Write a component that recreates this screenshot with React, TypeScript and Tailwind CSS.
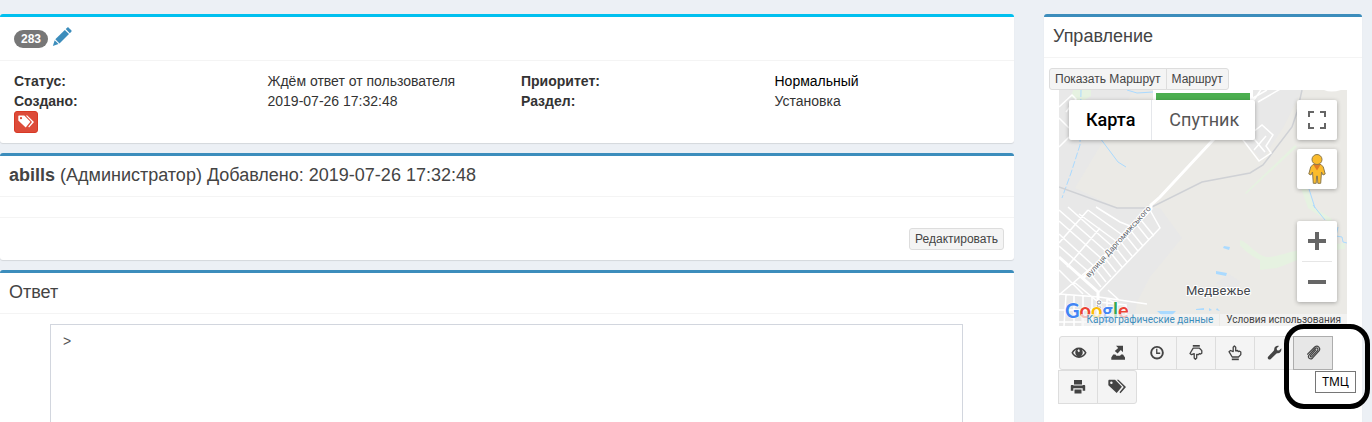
import type { ReactNode } from "react";

const FIELDS = [
  { label: "Статус:", value: "Ждём ответ от пользователя", valueClass: "" },
  { label: "Приоритет:", value: "Нормальный", valueClass: "text-black" },
  { label: "Создано:", value: "2019-07-26 17:32:48", valueClass: "" },
  { label: "Раздел:", value: "Установка", valueClass: "" },
];

function Icon({ children, className = "w-4 h-4" }: { children: ReactNode; className?: string }) {
  return (
    <svg viewBox="0 0 16 16" fill="currentColor" className={className} aria-hidden>
      {children}
    </svg>
  );
}

function TagsIcon({ className }: { className?: string }) {
  return (
    <Icon className={className}>
      <path
        fillRule="evenodd"
        d="M.3 2.600c0-.6.4-1 1-1h5L12.400 7.700 7.700 13.400 .3 6.500zM3 3.100a1.100 1.100 0 1 0 0 2.200 1.100 1.100 0 0 0 0-2.200z"
      />
      <path d="M7.800 1.600h1.500L16 8l-4.900 5.600-.9-.9L14 8.100z" />
    </Icon>
  );
}

function PencilIcon() {
  return (
    <svg viewBox="0 0 20 20" fill="currentColor" className="w-5 h-5" aria-hidden>
      <path d="M3.300 12.300 12.800 3l4.200 4.100-9.500 9.400z" />
      <path d="M13.700 2.100 15.200.7c.5-.5 1-.5 1.500 0l2.600 2.500c.5.5.5 1 0 1.500l-1.500 1.500z" />
      <path d="M2.700 13.300 6.500 17.100.9 18.900z" />
    </svg>
  );
}

const ACTIONS = [
  {
    label: "Просмотр",
    icon: (
      <Icon>
        <path
          fillRule="evenodd"
          d="M8 2.500c3.300 0 5.900 2 7.600 5.200-1.700 3.200-4.300 5.200-7.600 5.200S2.100 10.900.4 7.700C2.100 4.500 4.700 2.500 8 2.500zM2.200 7.700c1 1.700 2.300 2.800 3.900 3.300A4.200 4.200 0 0 1 5.300 4.700C4 5.300 3 6.300 2.200 7.700zm8.500-3a4.200 4.200 0 0 1-.8 6.300c1.600-.5 2.900-1.600 3.900-3.300-.8-1.400-1.800-2.400-3.100-3zM6.500 5.700l1.200 1.500 1.200-1-.8-1.900C7.300 4.300 6.700 4.900 6.500 5.700z"
        />
      </Icon>
    ),
  },
  {
    label: "Экспорт",
    icon: (
      <Icon>
        <path d="M6 .7h7v6.500L10.800 5 7.600 8.600 4.800 5.900l3.400-3z" />
        <path d="M3.200 9.400h2.200l1 1.300h3.700l1-1.300h1.900l2 3v2.300H1.300v-2.300z" />
      </Icon>
    ),
  },
  {
    label: "Время",
    icon: (
      <Icon>
        <path
          fillRule="evenodd"
          d="M8 .9a6.800 6.800 0 1 1 0 13.600A6.800 6.800 0 0 1 8 .9zm0 1.900a4.900 4.900 0 1 0 0 9.800 4.900 4.900 0 0 0 0-9.800z"
        />
        <path d="M7.100 3.700h1.300v3.900h2.800v1.300H7.100z" />
      </Icon>
    ),
  },
  {
    label: "Вниз",
    icon: (
      <Icon>
        <path d="M4.800 0h7v1.700h-7z" />
        <path
          fill="none"
          stroke="currentColor"
          strokeWidth="1.300"
          strokeLinejoin="round"
          d="M5.200 3.200h6.300l2.300 2.400v2.600l-1.200.8-1.300-.3-.9 1-1.700-.3v3.600l-1.300 1.200-1.200-1.200V8.600L3.500 9.700 2 8.500z"
        />
      </Icon>
    ),
  },
  {
    label: "Вверх",
    icon: (
      <Icon>
        <path d="M4.800 13.500h7v1.700h-7z" />
        <path
          fill="none"
          stroke="currentColor"
          strokeWidth="1.300"
          strokeLinejoin="round"
          d="M5.200 12h6.300l2.300-2.400V7l-1.200-.8-1.300.3-.9-1-1.700.3V2.200L7.400 1 6.200 2.200v4.400L3.500 5.500 2 6.700z"
        />
      </Icon>
    ),
  },
  {
    label: "Настройка",
    icon: (
      <Icon>
        <path d="M13 .9 10.700 3.200l.3 2 2 .3L15.300 3.200c.5 2.500-.9 5-3.400 5-.6 0-1 .1-1.400.4l-5.900 5.600c-1.500 1.200-3.800-.8-2.500-2.500l5.600-6c.4-.4.5-.9.5-1.400 0-2.500 2.300-4 4.800-3.400z" />
      </Icon>
    ),
  },
  {
    label: "ТМЦ",
    active: true,
    icon: (
      <Icon>
        <path
          fill="none"
          stroke="currentColor"
          strokeWidth="1.200"
          strokeLinecap="round"
          d="M10.800 4.900 5.600 10.700c-.7.900.4 1.800 1.200 1L12.400 5.600c1.500-1.800-.6-3.600-2.200-2.100L4 10.200c-1.800 2.400 1.300 5 3.400 3l6.400-7c2.500-3.100-1-6.500-4.100-4.200L2.600 9.200"
        />
      </Icon>
    ),
  },
  {
    label: "Печать",
    icon: (
      <Icon>
        <path d="M4 1h8v4.500H4zM1.800 6h1.500v.5h9.400V6h1.500c.6 0 1 .4 1 1v4.700h-2.500V9.200H3.300v2.500H.8V7c0-.6.400-1 1-1zM4.500 10.500h7v4h-7z" />
      </Icon>
    ),
  },
  { label: "Метки", icon: <TagsIcon className="w-[18px] h-[18px]" /> },
];

function Box({ accent, className = "", children }: { accent: string; className?: string; children: ReactNode }) {
  return (
    <section className={`bg-white border-t-[3px] shadow-[0_1px_1px_rgba(0,0,0,0.1)] ${accent} ${className}`}>
      {children}
    </section>
  );
}

function BoxHeader({ children }: { children: ReactNode }) {
  return (
    <header className="px-[9px] pt-[9px] pb-[11px] border-b border-[#f4f4f4]">
      <h3 className="text-lg leading-5 text-[#444]">{children}</h3>
    </header>
  );
}

function MapScene() {
  return (
    <svg
      viewBox="0 0 288 236"
      preserveAspectRatio="xMidYMid slice"
      className="absolute inset-0 w-full h-full"
      fontFamily="Roboto, sans-serif"
      aria-hidden
    >
      <rect width="288" height="236" fill="#ebeae6" />
      <path
        fill="#e8e8e8"
        d="M0 0H75L16 98 58 118H89L101 118 123 148 91 187 78 212 74 236H0zM180 0H243L224 38 203 70 184 50zM157 193l13-9 12 8-9 11z"
      />
      <path fill="#e6f2e1" d="M14 0h18v6L22 12l-10-5zM186 103l50-48 2 2-51 47zM248 98l8 20 17 11-3 3-21-14-7-20zM181 150c8 2 15 14 26 17 12 1 26-9 79-14v6c-38 3-52 14-68 19l-17 2v-10c-9-4-17-11-20-15z" />
      <g fill="none" stroke="#aadaff">
        <path d="M22 0 21 55 12 83 3 108" strokeDasharray="7 2" />
        <path d="M41 48 59 72 67 77M68 0l10 3 16-1M250 99l6 19M254 115l12 15M279 137l-2 9 6 1 1 5 4 1" />
      </g>
      <path fill="#aadaff" d="m165 156 6 1-1 3-6-2zM157 181l11 2-1 3-10-2zM98 221h19l-9 9zM137 219l8-1v2h-8zM150 218l3 2-3 1zM158 218l3 3-4-1z" />
      <path d="M0 97 58 118H91L143 92l48-9 13-8 29-38 5-15 5-22" fill="none" stroke="#cfd1d5" strokeWidth="1.500" />

      <g fill="none" stroke="#fff">
        <path strokeWidth="3" d="M195 8 154 50 101 107 92 115v4L24 188M0 167l39 35v34" />
        <path strokeWidth="1.500" d="M0 17 13 5l4 4L7 22M0 28l10 10M0 57l10-10M194 8l14-8M199 12l24-14M195 10l8-12" />
        <path strokeWidth="1.500" d="M184 50l19-15 11 10-7 11 5 7-12 8zM191 44l15 18M195 60l12-14" />
        <path
          strokeWidth="1.500"
          d="M29 120 0 153M41 138 8 177M0 205l34-29M0 120l50 44M0 131l43 38M0 144l37 34M0 156l31 27M9 117l46 41M20 124l41 30M29 120l37 27M37 117l24 15 15 6M82 130l13 16M78 135l12 15M72 141l12 15M67 146l12 15M61 151l12 15M56 157l12 15M51 162l12 15M45 167l12 15M40 172l12 15M35 177l12 15M30 182l12 15M24 188l15 14M91 120l10 18-62 65M15 192l24 20M0 180l24 24"
        />
        <path strokeWidth="1.500" d="M0 204l40 3 48 7M0 220h36M7 205l-2 31M15 206v30M24 206v30M33 207v29M39 212l28 3v21M48 209l12 6M0 232h30M48 209v27M58 212v24M49 200l11 10" />
      </g>
      <path d="M265 0q7 3 17 0z" fill="#fff" />

      <g fill="#62676d" stroke="#fff" strokeWidth="2" paintOrder="stroke" fontSize="8">
        <text transform="translate(30 188) rotate(-48)">вулиця Даргомижського</text>
        <text transform="translate(42 218) rotate(-90)">го</text>
      </g>
      <text x="127" y="205" fontSize="13" fill="#45484d" stroke="#fff" strokeWidth="2" paintOrder="stroke">
        Медвежье
      </text>
      <text x="6" y="228" fontSize="20" fontFamily="Lato, sans-serif" fontWeight="700" stroke="#fff" strokeWidth="1" paintOrder="stroke">
        <tspan fill="#4285f4">G</tspan>
        <tspan fill="#ea4335">o</tspan>
        <tspan fill="#fbbc05">o</tspan>
        <tspan fill="#4285f4">g</tspan>
        <tspan fill="#34a853">l</tspan>
        <tspan fill="#ea4335">e</tspan>
      </text>
    </svg>
  );
}

function RouteMap() {
  const control = "bg-white rounded-xs shadow-[0_1px_4px_rgba(0,0,0,0.3)]";

  return (
    <div className="relative h-[236px] overflow-hidden font-[Roboto,sans-serif]">
      <MapScene />
      <div className="absolute left-[94px] top-0 w-[100px] h-5 bg-white px-[3px] pt-[3px]">
        <div className="h-full bg-[#4caf50]" />
      </div>
      <div className={`absolute left-2.5 top-2.5 flex h-10 text-lg ${control}`}>
        <button type="button" className="pl-[17px] pr-4 font-medium text-black border-r border-gray-200">
          Карта
        </button>
        <button type="button" className="pl-[17px] pr-4 text-[#565656]">
          Спутник
        </button>
      </div>

      <button type="button" aria-label="Полный экран" className={`absolute right-2.5 top-2.5 size-10 grid place-items-center ${control}`}>
        <svg viewBox="0 0 18 18" className="w-[18px] h-[18px]" fill="#666" aria-hidden>
          <path d="M0 0h6v2H2v4H0zM12 0h6v6h-2V2h-4zM0 12h2v4h4v2H0zM16 12h2v6h-6v-2h4z" />
        </svg>
      </button>
      <button type="button" aria-label="Просмотр улиц" className={`absolute right-2.5 top-[59px] size-10 grid place-items-center ${control}`}>
        <svg viewBox="0 0 18 30" className="w-[18px] h-[30px]" aria-hidden>
          <path
            d="M5 10.500h8l2.300 2.500 1.900 7-2.200 1-1.500-3-.8 11.300H9.800L9.400 22h-.8l-.4 7.300H5.300L4.500 18 3 21l-2.200-1 1.900-7z"
            fill="#fbbc2c"
            stroke="#8d7a4c"
          />
          <path d="M5.300 10.500h7.400L9 16.500z" fill="#e07b25" />
          <circle cx="9" cy="5.500" r="5" fill="#fbbc2c" stroke="#8d7a4c" />
        </svg>
      </button>
      <div className={`absolute right-2.5 top-[131px] w-10 ${control}`}>
        <button type="button" aria-label="Увеличить" className="w-10 h-10 grid place-items-center">
          <svg viewBox="0 0 18 18" className="w-[18px] h-[18px]" fill="#666" aria-hidden>
            <path d="M7 0h4v7h7v4h-7v7H7v-7H0V7h7z" />
          </svg>
        </button>
        <div className="h-px mx-[5px] bg-[#e6e6e6]" />
        <button type="button" aria-label="Уменьшить" className="w-10 h-10 grid place-items-center">
          <svg viewBox="0 0 18 18" className="w-[18px] h-[18px]" fill="#666" aria-hidden>
            <path d="M0 7h18v4H0z" />
          </svg>
        </button>
      </div>

      <div className="absolute right-0 bottom-0 flex gap-px text-[10px] leading-3 whitespace-nowrap">
        <a href="#map-data" className="px-1.5 bg-[#f5f5f5]/70 text-[#3c8dbc]">
          Картографические данные
        </a>
        <a href="#terms" className="px-1.5 bg-[#f5f5f5]/70 text-[#444]">
          Условия использования
        </a>
      </div>
    </div>
  );
}

function ActionBar() {
  return (
    <div className="flex flex-wrap mt-2.5 text-[#444]">
      {ACTIONS.map((action, i) => (
        <div key={action.label} className={i === 0 ? "relative" : "relative -ml-px"}>
          <button
            type="button"
            aria-label={action.label}
            className={`w-10 h-[34px] grid place-items-center border ${
              action.active ? "bg-[#e7e7e7] border-[#adadad]" : "bg-[#f4f4f4] border-[#ddd]"
            } ${i === 0 ? "rounded-l-[3px]" : ""} ${i === ACTIONS.length - 1 ? "rounded-r-[3px]" : ""}`}
          >
            {action.icon}
          </button>
          {action.active && (
            <>
              <span className="absolute z-10 left-[22px] top-[35px] w-[41px] h-[22px] grid place-items-center bg-white border border-[#767676] text-xs text-black font-['Noto_Sans',sans-serif]">
                {action.label}
              </span>
              <span className="absolute z-20 -left-[9px] -top-3 w-[86px] h-[85px] border-[5px] border-black rounded-[20px] pointer-events-none" />
            </>
          )}
        </div>
      ))}
    </div>
  );
}

export default function App() {
  const smallButton = "h-[22px] px-[5px] text-xs text-[#444] bg-[#f4f4f4] border border-[#ddd]";

  return (
    <div className="min-h-screen flex gap-[30px] pt-3.5 pr-2.5 bg-[#ecf0f5] text-sm text-[#333] font-['Liberation_Sans',Arial,sans-serif] overflow-hidden">
      <main className="flex-1 min-w-0 flex flex-col gap-2.5">
        <Box accent="border-[#00c0ef]" className="rounded-[3px]">
          <header className="h-11 flex items-center gap-1 px-3.5 pb-1 border-b border-[#f4f4f4]">
            <span className="mt-1 px-[7px] py-[3px] rounded-[10px] bg-[#777] text-white text-xs leading-3 font-bold">283</span>
            <a href="#edit" aria-label="Изменить" className="text-[#3c8dbc]">
              <PencilIcon />
            </a>
          </header>
          <div className="py-2.5">
            <dl className="grid grid-cols-4 leading-5">
              {FIELDS.map((field) => (
                <div key={field.label} className="contents">
                  <dt className="pl-3.5 font-bold">{field.label}</dt>
                  <dd className={`pl-3.5 ${field.valueClass}`}>{field.value}</dd>
                </div>
              ))}
            </dl>
            <button
              type="button"
              aria-label="Метки"
              className="ml-3.5 w-6 h-[22px] grid place-items-center rounded-[3px] border border-[#d73925] bg-[#dd4b39] text-white"
            >
              <TagsIcon className="w-4 h-4" />
            </button>
          </div>
        </Box>

        <Box accent="border-[#3c8dbc]" className="rounded-[3px]">
          <BoxHeader>
            <b>abills</b> (Администратор) Добавлено: 2019-07-26 17:32:48
          </BoxHeader>
          <div className="h-5" />
          <footer className="flex justify-end p-2.5 border-t border-[#f4f4f4]">
            <button type="button" className={`rounded-[3px] ${smallButton}`}>
              Редактировать
            </button>
          </footer>
        </Box>

        <Box accent="border-[#3c8dbc]" className="flex-1 flex flex-col rounded-t-[3px]">
          <BoxHeader>
            <label htmlFor="reply">Ответ</label>
          </BoxHeader>
          <div className="flex-1 flex pt-2.5 pl-[50px] pr-[51px]">
            <textarea
              id="reply"
              defaultValue=">"
              className="block w-full resize-none border border-b-0 border-[#d2d6de] px-3 py-1.5 text-sm leading-5 text-[#555] outline-none"
            />
          </div>
        </Box>
      </main>

      <aside className="w-[318px] shrink-0 flex">
        <Box accent="border-[#3c8dbc]" className="w-full rounded-t-[3px]">
          <BoxHeader>Управление</BoxHeader>
          <div className="flex pt-2.5 pl-[5px]">
            <button type="button" className={`rounded-l-[3px] ${smallButton}`}>
              Показать Маршрут
            </button>
            <button type="button" className={`-ml-px rounded-r-[3px] ${smallButton}`}>
              Маршрут
            </button>
          </div>
          <div className="px-[15px]">
            <RouteMap />
            <ActionBar />
          </div>
        </Box>
      </aside>
    </div>
  );
}
